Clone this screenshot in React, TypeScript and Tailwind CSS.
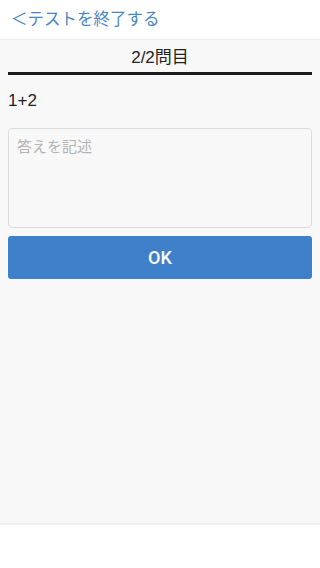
import React from "react";

export default function App() {
  return (
    <div
      className="w-[320px] h-[568px] flex flex-col bg-white"
      style={{ fontFamily: '"Helvetica Neue", "Liberation Sans", "Noto Sans CJK JP", sans-serif' }}
    >
      <div className="h-[40px] flex items-center px-[11px] border-b border-[#ececec] bg-white shrink-0">
        <span className="text-[16.5px] text-[#4a86c6] leading-none">＜テストを終了する</span>
      </div>
      <div className="flex-1 bg-[#f8f8f8] border-b-2 border-[#efefef] px-[8px] flex flex-col">
        <div className="h-[32px] flex items-center justify-center pt-[4px] text-[17px] text-[#222]">2/2問目</div>
        <div className="h-[3px] bg-[#1c1c1c]"></div>
        <div className="mt-[15px] text-[17px] text-[#222] leading-[22px]">1+2</div>
        <textarea
          placeholder="答えを記述"
          className="mt-[16px] h-[100px] w-full rounded-[4px] border border-[#dcdcdc] bg-[#f8f8f8] px-[8px] py-[7px] text-[15px] placeholder:text-[#b3b3b3] resize-none outline-none"
        />
        <button className="mt-[8px] h-[43px] w-full rounded-[3px] bg-[#3f80cb] text-white text-[18px] font-medium font-[Roboto,sans-serif]">
          OK
        </button>
      </div>
      <div className="h-[43px] bg-white shrink-0"></div>
    </div>
  );
}
